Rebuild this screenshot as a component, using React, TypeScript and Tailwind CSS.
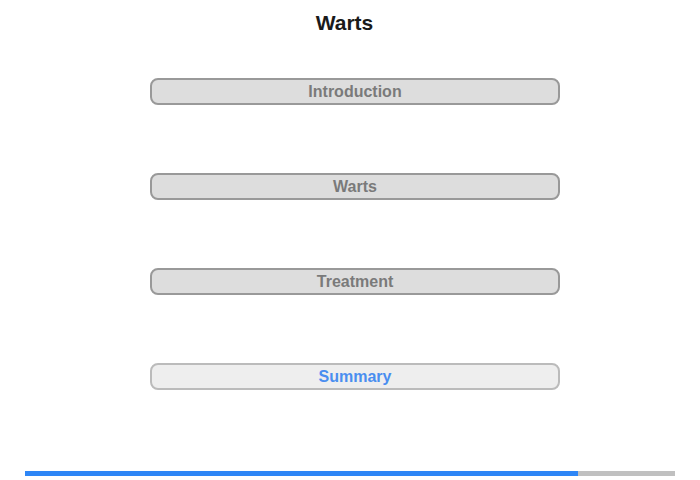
const sections = [
  { label: 'Introduction', current: false },
  { label: 'Warts', current: false },
  { label: 'Treatment', current: false },
  { label: 'Summary', current: true },
];

export default function App() {
  return (
    <div className="w-[700px] h-[480px] bg-white flex flex-col font-['Liberation_Sans',Arial,sans-serif]">
      <div className="pt-[11px] flex justify-center pr-[11px]">
        <h1 className="text-[21px] leading-[24px] font-bold text-[#1a1a1a]">Warts</h1>
      </div>

      <div className="mt-[43px] flex flex-col gap-[68px] pl-[150px]">
        {sections.map((s) => (
          <button
            key={s.label}
            className={`w-[410px] h-[27px] rounded-[8px] border-2 text-[16px] font-bold leading-none flex items-center justify-center ${
              s.current
                ? 'bg-[#eeeeee] border-[#bbbbbb] text-[#4a8ef0]'
                : 'bg-[#dddddd] border-[#999999] text-[#7a7a7a]'
            }`}
          >
            {s.label}
          </button>
        ))}
      </div>

      <div className="mt-auto mb-[4px] mx-[25px] h-[5px] bg-[#c0c0c0] flex">
        <div className="h-full bg-[#2e86f6]" style={{ width: `${(553 / 650) * 100}%` }} />
      </div>
    </div>
  );
}
